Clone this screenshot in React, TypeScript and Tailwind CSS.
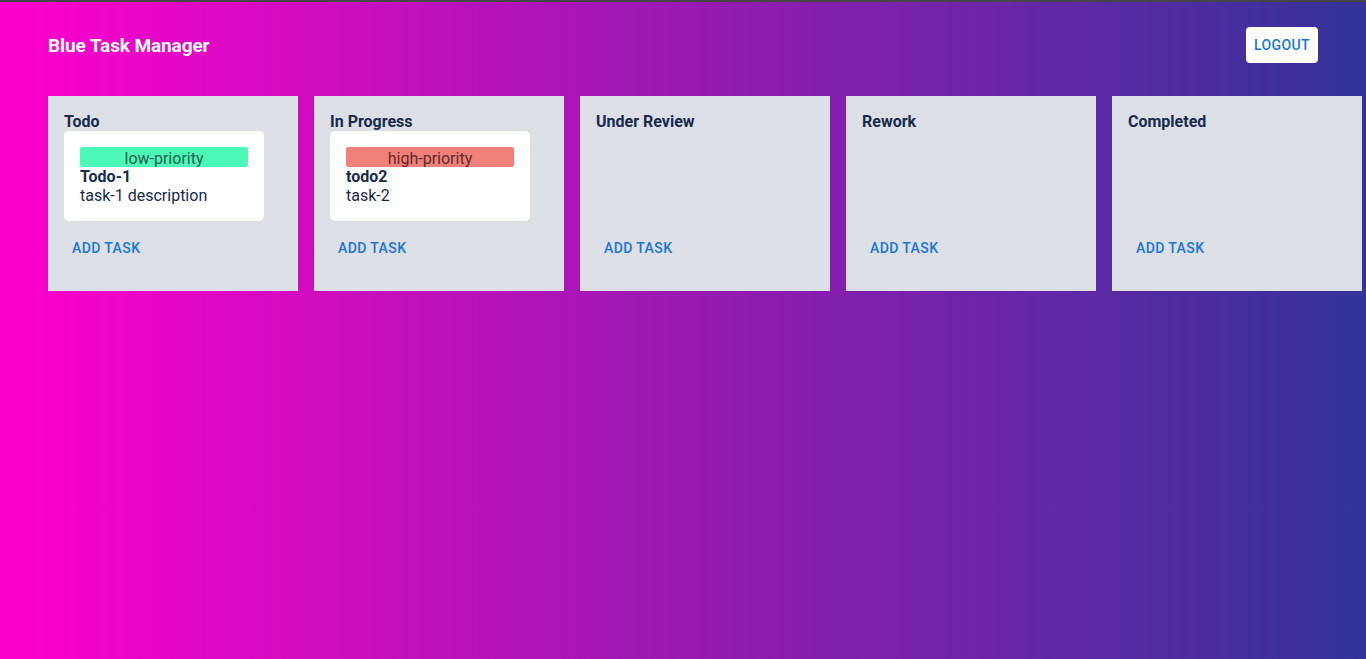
import React from 'react';

type Task = { id: string; title: string; description: string; priority: 'low' | 'high' };
type Column = { id: string; name: string; tasks: Task[] };

const columns: Column[] = [
  { id: 'todo', name: 'Todo', tasks: [{ id: '1', title: 'Todo-1', description: 'task-1 description', priority: 'low' }] },
  { id: 'progress', name: 'In Progress', tasks: [{ id: '2', title: 'todo2', description: 'task-2', priority: 'high' }] },
  { id: 'review', name: 'Under Review', tasks: [] },
  { id: 'rework', name: 'Rework', tasks: [] },
  { id: 'done', name: 'Completed', tasks: [] },
];

export default function App() {
  return (
    <div className="min-h-[659px] w-full overflow-hidden bg-[linear-gradient(to_right,#ff00cc,#333399)] font-['Roboto','Liberation_Sans',sans-serif]">
      <div className="h-[2px] bg-[#454545]" />
      <header className="flex h-[86px] items-center justify-between pl-12 pr-12">
        <h1 className="mt-[2px] text-[19px] font-bold tracking-[-0.1px] text-white">Blue Task Manager</h1>
        <button className="h-9 rounded bg-white px-2 text-sm font-medium tracking-[0.4px] text-[#1976d2]">
          LOGOUT
        </button>
      </header>

      <div className="mt-2 flex gap-4 pl-12">
        {columns.map(col => (
          <BoardColumn key={col.id} column={col} />
        ))}
      </div>
    </div>
  );
}

function BoardColumn({ column }: { column: Column }) {
  return (
    <div className="flex h-[195px] w-[250px] shrink-0 flex-col bg-[#dcdfe6] px-4 pt-4">
      <h2 className="text-base font-bold leading-[19px] text-[#172b4d]">{column.name}</h2>
      <div className="min-h-[90px]">
        {column.tasks.map(task => (
          <TaskCard key={task.id} task={task} />
        ))}
      </div>
      <div className="mt-[9px]">
        <button className="h-9 rounded px-2 text-sm font-medium tracking-[0.4px] text-[#1976d2]">ADD TASK</button>
      </div>
    </div>
  );
}

function TaskCard({ task }: { task: Task }) {
  return (
    <div className="w-[200px] rounded-[5px] bg-white p-4 text-[#172b4d]">
      <div
        className={`h-5 rounded-[2px] text-center text-base leading-[23px] ${
          task.priority === 'low' ? 'bg-[#4bf8b7] text-[#24604f]' : 'bg-[#f2807a] text-[#5e2b2c]'
        }`}
      >
        {task.priority === 'low' ? 'low-priority' : 'high-priority'}
      </div>
      <p className="text-base font-bold leading-[19px]">{task.title}</p>
      <p className="text-base leading-[19px]">{task.description}</p>
    </div>
  );
}
